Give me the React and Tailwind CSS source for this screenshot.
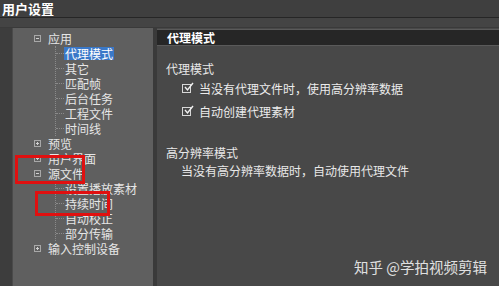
import React from 'react';

const font = { fontFamily: '"Noto Sans CJK SC", "Noto Sans", sans-serif' };

function Box({ open }) {
  return (
    <span className="relative w-[7px] h-[7px] border border-[#a8a8a8] flex items-center justify-center shrink-0">
      <span className="absolute w-[3px] h-px bg-[#d0d0d0]" />
      {!open && <span className="absolute w-px h-[3px] bg-[#d0d0d0]" />}
    </span>
  );
}

function Top({ label, open }) {
  return (
    <div className="h-[15px] flex items-center">
      <span className="w-[21px]" />
      <Box open={open} />
      <span className="ml-[7px] text-[#e6e6e6] leading-[13px]">{label}</span>
    </div>
  );
}

function Kids({ items, selected }) {
  return (
    <div className="ml-[42px] border-l border-dotted border-[#8a8a8a]">
      {items.map((t) => (
        <div key={t} className="h-[15px] flex items-center">
          <span className="w-[8px] border-t border-dotted border-[#8a8a8a]" />
          <span
            className={
              t === selected
                ? 'px-[1px] bg-[#3a78c8] text-white leading-[13px]'
                : 'px-[1px] text-[#e6e6e6] leading-[13px]'
            }
          >
            {t}
          </span>
        </div>
      ))}
    </div>
  );
}

function Check({ label }) {
  return (
    <div className="flex items-center h-[23px] pl-[16px]">
      <span className="relative w-[9px] h-[9px] border border-[#d8d8d8] shrink-0">
        <svg className="absolute -top-[3px] left-[1px]" width="10" height="10" viewBox="0 0 10 10">
          <path d="M1 5 L3.5 8 L9 1" fill="none" stroke="#f0f0f0" strokeWidth="1.4" />
        </svg>
      </span>
      <span className="ml-[8px] text-[#ececec]">{label}</span>
    </div>
  );
}

export default function App() {
  return (
    <div className="w-[499px] h-[286px] bg-[#3c3c3c] flex flex-col overflow-hidden text-[12px] leading-[15px] relative" style={font}>
      <div className="h-[18px] flex items-center px-[2px] bg-[#3f3f3f] border-b border-[#262626]">
        <span className="font-bold text-white text-[13px]">用户设置</span>
      </div>
      <div className="h-[10px] bg-[#444444] border-b border-[#3a3a3a]" />
      <div className="flex-1 flex">
        <div className="w-[12px] bg-[#3d3d3d]" />
        <div className="w-[141px] bg-[#5f5f5f] border-l border-[#4a4a4a] pt-[3px]">
          <Top label="应用" open />
          <Kids items={['代理模式', '其它', '匹配帧', '后台任务', '工程文件', '时间线']} selected="代理模式" />
          <Top label="预览" />
          <Top label="用户界面" />
          <Top label="源文件" open />
          <Kids items={['设置播放素材', '持续时间', '自动校正', '部分传输']} />
          <Top label="输入控制设备" />
        </div>
        <div className="w-[4px] bg-[#3a3a3a]" />
        <div className="flex-1 bg-[#484848] flex flex-col">
          <div className="h-[17px] mt-[1px] bg-[#262626] border-y border-[#5a5a5a] flex items-center pl-[10px]">
            <span className="font-bold text-white">代理模式</span>
          </div>
          <div className="pl-[9px] pt-[13px] text-[#e8e8e8]">
            <div className="h-[18px] flex items-center">代理模式</div>
            <Check label="当没有代理文件时，使用高分辨率数据" />
            <Check label="自动创建代理素材" />
            <div className="h-[20px]" />
            <div className="h-[18px] flex items-center">高分辨率模式</div>
            <div className="h-[19px] flex items-center pl-[15px]">当没有高分辨率数据时，自动使用代理文件</div>
          </div>
          <div className="flex-1" />
          <div className="flex justify-end pr-[12px] pb-[12px]">
            <span className="text-[14.5px] text-[#e0e0e0]">知乎 @学拍视频剪辑</span>
          </div>
        </div>
      </div>
      <div className="absolute left-[15px] top-[155px] w-[70px] h-[29px] border-[3px] border-[#e01010]" />
      <div className="absolute left-[35px] top-[191px] w-[75px] h-[25px] border-[3px] border-[#e01010]" />
    </div>
  );
}
